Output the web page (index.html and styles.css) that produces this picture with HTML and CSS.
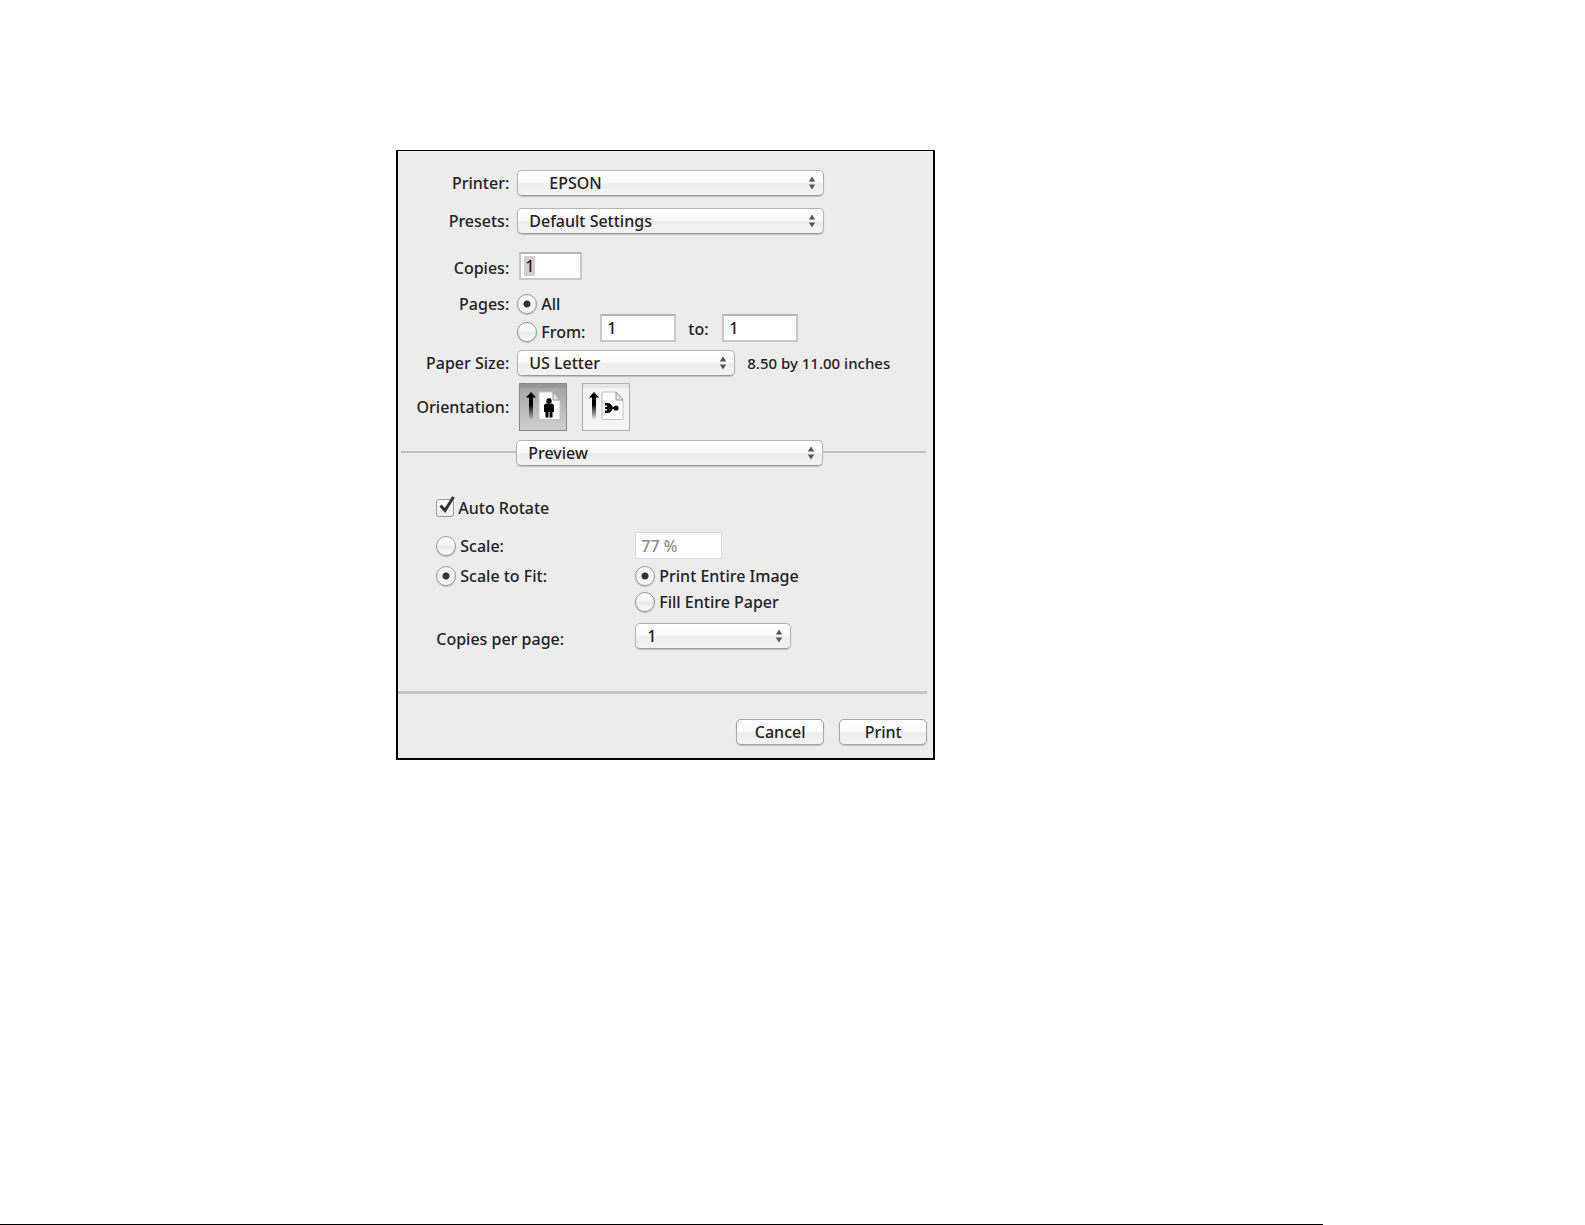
FILE: index.html
```html
<!DOCTYPE html>
<html lang="en">
<head>
    <meta charset="UTF-8">
    <title>Print</title>
    <link rel="stylesheet" href="styles.css">
</head>
<body>

<svg class="symbols" aria-hidden="true">
    <symbol id="arrows" viewBox="0 0 8 16">
        <path d="M4 1.500 7.200 6.500H.8z M4 14.500 .8 9.500h6.400z" fill="#555"/>
    </symbol>
    <symbol id="sheet" viewBox="0 0 24 30">
        <path d="M1 1h14l7 8v19.500H1z" fill="#fcfcfc" stroke="#c4c4c4"/>
        <path d="M15 1v8h7z" fill="#e2e2e2" stroke="#999"/>
    </symbol>
    <symbol id="up" viewBox="0 0 10 28">
        <path d="M5 0 10 5.500H7V28H3V5.500H0z" fill="url(#fade)"/>
    </symbol>
    <linearGradient id="fade" x1="0" y1="0" x2="0" y2="1">
        <stop offset="0.45" stop-color="#000"/>
        <stop offset="1" stop-color="#000" stop-opacity="0"/>
    </linearGradient>
</svg>

<form class="dialog">
    <div class="settings">
        <div class="row">
            <label class="name" for="printer">Printer:</label>
            <span class="popup wide indent">
                <select id="printer"><option>EPSON</option></select>
                <svg><use href="#arrows"/></svg>
            </span>
        </div>
        <div class="row presets">
            <label class="name" for="presets">Presets:</label>
            <span class="popup wide">
                <select id="presets"><option>Default Settings</option></select>
                <svg><use href="#arrows"/></svg>
            </span>
        </div>
        <div class="row copies">
            <label class="name" for="copies">Copies:</label>
            <input class="field marked" id="copies" type="text" value="1">
        </div>
        <div class="row pages">
            <span class="name">Pages:</span>
            <label class="choice"><input type="radio" name="pages" checked>All</label>
        </div>
        <div class="row range">
            <span class="name"></span>
            <label class="choice from"><input type="radio" name="pages">From:</label>
            <input class="field" type="text" value="1" aria-label="From page">
            <label class="to" for="to">to:</label>
            <input class="field" id="to" type="text" value="1">
        </div>
        <div class="row paper">
            <label class="name" for="paper">Paper Size:</label>
            <span class="popup medium">
                <select id="paper"><option>US Letter</option></select>
                <svg><use href="#arrows"/></svg>
            </span>
            <span class="size">8.50 by 11.00 inches</span>
        </div>
        <div class="row orientation">
            <span class="name">Orientation:</span>
            <button class="orient pressed" type="button" aria-label="Portrait">
                <svg viewBox="0 0 46 46">
                    <use href="#up" x="6" y="8" width="10" height="28"/>
                    <use href="#sheet" x="18" y="7" width="24" height="30"/>
                    <circle cx="29" cy="17" r="2.700"/>
                    <path d="M26 19.500h6l2 1.500v7h-1.500v5.500h-3V28h-1v5.500h-3V28H24v-7z"/>
                </svg>
            </button>
            <button class="orient" type="button" aria-label="Landscape">
                <svg viewBox="0 0 46 46">
                    <use href="#up" x="6" y="8" width="10" height="28"/>
                    <use href="#sheet" x="18" y="7" width="24" height="30"/>
                    <circle cx="33" cy="24" r="2.600"/>
                    <path d="M22 19h2.500c2.500 0 4.500 2 5 4h2v2h-2c-.5 2-2.500 4-5 4H22v-2.500h2V25h-2v-2h2v-1.500h-2z"/>
                </svg>
            </button>
        </div>
    </div>

    <div class="divider">
        <span class="popup wide">
            <select aria-label="Section"><option>Preview</option></select>
            <svg><use href="#arrows"/></svg>
        </span>
    </div>

    <div class="preview">
        <label class="check">
            <input type="checkbox" checked>
            <svg viewBox="0 0 20 20"><path d="M4.500 9.500 9 14.500 17.500 1" fill="none" stroke="#333" stroke-width="3"/></svg>
            Auto Rotate
        </label>
        <div class="pair scale">
            <label class="choice"><input type="radio" name="scale">Scale:</label>
            <input class="field percent" type="text" value="77 %" aria-label="Scale percent" disabled>
        </div>
        <div class="pair fit">
            <label class="choice"><input type="radio" name="scale" checked>Scale to Fit:</label>
            <div class="modes">
                <label class="choice"><input type="radio" name="mode" checked>Print Entire Image</label>
                <label class="choice"><input type="radio" name="mode">Fill Entire Paper</label>
            </div>
        </div>
        <div class="pair per-page">
            <label for="perpage">Copies per page:</label>
            <span class="popup small">
                <select id="perpage"><option>1</option></select>
                <svg><use href="#arrows"/></svg>
            </span>
        </div>
    </div>

    <div class="actions">
        <button class="push" type="button">Cancel</button>
        <button class="push" type="submit">Print</button>
    </div>
</form>

<hr class="page-end">

</body>
</html>
```
FILE: styles.css
```css
*{
    box-sizing: border-box;
    margin: 0;
    padding: 0;
}
body{
    min-height: 100vh;
    display: flex;
    flex-direction: column;
    background: #fff;
    color: #222;
    font: 500 16px/20px "Noto Sans", "Open Sans", sans-serif;
}
input, select, button{
    font: inherit;
    color: inherit;
}
.symbols{
    position: absolute;
    width: 0;
    height: 0;
}

.dialog{
    width: 34%;
    min-width: 538px;
    margin: 150px 0 40px 25%;
    padding-bottom: 13px;
    background: #ececec;
    border: 2px solid #000;
    border-top-width: 1px;
}

/* label + control rows */
.settings{
    padding-top: 19px;
}
.row{
    display: flex;
    align-items: center;
}
.name{
    width: 111px;
    margin-right: 8px;
    text-align: right;
}
.presets{
    margin-top: 12px;
}
.copies{
    margin-top: 18px;
}
.copies label{
    padding-top: 3px;
}
.pages{
    margin-top: 14px;
}
.range{
    align-items: flex-end;
}
.paper{
    margin-top: 8px;
}
.orientation{
    margin-top: 7px;
}

/* pop-up menus */
.popup{
    position: relative;
    display: block;
}
.popup select{
    display: block;
    width: 100%;
    height: 26px;
    padding: 0 24px 1px 11px;
    appearance: none;
    border: 1px solid #b4b4b4;
    border-bottom-color: #999;
    border-radius: 5px;
    background: linear-gradient(#fff, #fafafa 45%, #eee 55%, #f3f3f3);
    box-shadow: 0 1px 1px #c0c0c0;
}
.popup svg{
    position: absolute;
    top: 5px;
    right: 8px;
    width: 8px;
    height: 16px;
    pointer-events: none;
}
.wide{
    width: 307px;
}
.medium{
    width: 218px;
}
.small{
    width: 156px;
}
.indent select{
    padding-left: 31px;
}
.size{
    margin-left: 12px;
    font-size: 15px;
}

/* text boxes */
.field{
    width: 76px;
    height: 28px;
    padding: 0 5px;
    border: 2px solid #c8c8c8;
    border-top-color: #b4b4b4;
    background: #fff;
}
.marked{
    width: 63px;
    margin-left: 2px;
    padding: 0 4px;
    background: linear-gradient(#d0d0d0, #d0d0d0) 3px 2px / 11px 20px no-repeat #fff;
}
.percent{
    width: 87px;
    height: 27px;
    border: 1px solid #dadada;
    color: #8c8c8c;
}

/* radios and tick box */
.choice{
    display: flex;
    align-items: center;
    gap: 4px;
}
.choice input{
    width: 20px;
    height: 20px;
    appearance: none;
    border: 1px solid #999;
    border-radius: 50%;
    background: linear-gradient(#fff, #f4f4f4 45%, #e9e9e9 55%, #fff);
    box-shadow: 0 1px 1px #b4b4b4;
}
.choice input:checked{
    background: radial-gradient(circle, #333 3px, transparent 4px), linear-gradient(#fff, #f0f0f0 50%, #fff);
}
.from{
    width: 83px;
}
.to{
    width: 46px;
    padding-left: 12px;
    padding-bottom: 3px;
}
.check{
    position: relative;
    display: flex;
    align-items: center;
    gap: 4px;
}
.check input{
    width: 18px;
    height: 18px;
    appearance: none;
    border: 1px solid #999;
    border-radius: 3px;
    background: linear-gradient(#fff, #ececec);
}
.check svg{
    position: absolute;
    left: 0;
    top: -2px;
    width: 20px;
    height: 20px;
}

.orient{
    width: 48px;
    height: 48px;
    margin-left: 2px;
    border: 1px solid #b0b0b0;
    background: linear-gradient(#e6e6e6 4px, #f4f4f4 4px);
}
.orient + .orient{
    margin-left: 15px;
}
.orient svg{
    display: block;
}
.pressed{
    border-color: #888;
    background: linear-gradient(#989898 4px, #a6a6a6 4px, #cfcfcf);
}

/* section menu with a line on both sides */
.divider{
    display: flex;
    align-items: center;
    margin-top: 9px;
    padding: 0 7px 0 3px;
}
.divider::before, .divider::after{
    content: "";
    height: 2px;
    margin-bottom: 3px;
    background: #c0c0c0;
}
.divider::before{
    width: 115px;
}
.divider::after{
    flex: 1;
}

.preview{
    padding: 32px 0 42px 38px;
}
.pair{
    display: grid;
    grid-template-columns: 199px 1fr;
    align-items: center;
}
.scale{
    margin-top: 14px;
}
.fit{
    align-items: start;
    margin-top: 7px;
}
.modes{
    display: grid;
    gap: 6px;
}
.per-page{
    margin-top: 11px;
}
.per-page label{
    padding-top: 6px;
}

.actions{
    display: flex;
    justify-content: flex-end;
    gap: 15px;
    margin-right: 6px;
    padding-top: 25px;
    border-top: 3px solid #c4c4c4;
}
.push{
    width: 88px;
    height: 26px;
    padding-bottom: 1px;
    border: 1px solid #a6a6a6;
    border-radius: 5px;
    background: linear-gradient(#fff, #fafafa 45%, #ededed 55%, #f4f4f4);
    box-shadow: 0 1px 1px #c0c0c0;
}

.page-end{
    width: 83.5%;
    margin-top: auto;
    border: 0;
    border-top: 1px solid #000;
}
```
